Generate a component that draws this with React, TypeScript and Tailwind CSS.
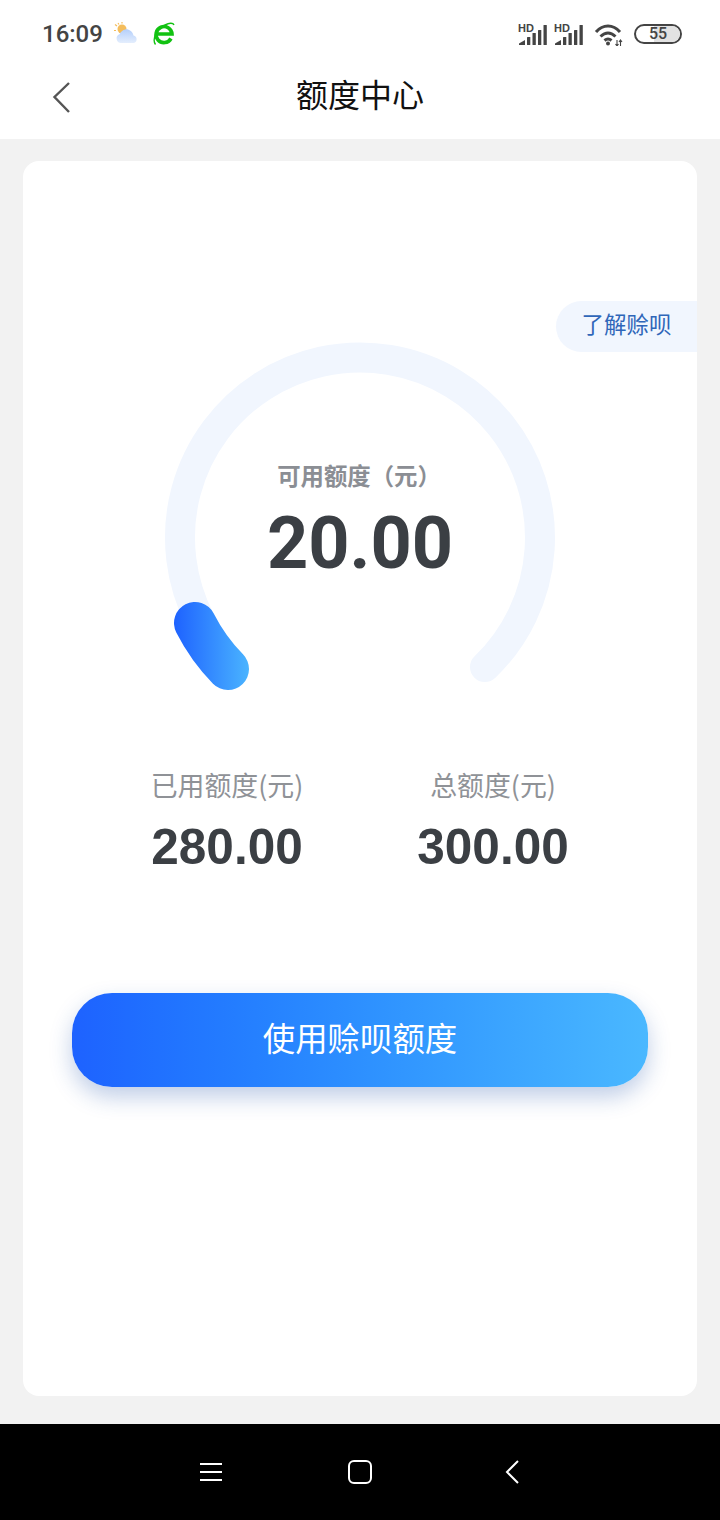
const cjk = "font-['Noto_Sans_CJK_SC','Noto_Sans',sans-serif]";

function SignalIcon() {
  return (
    <div className="relative w-[30px] h-[24px]">
      <span className="absolute left-[-1px] top-0 font-['Liberation_Sans',sans-serif] font-bold text-[11px] leading-[12px] text-[#444]">HD</span>
      <svg width="30" height="24" viewBox="0 0 30 24" fill="#444" className="absolute left-0 top-0">
        <path d="M0 23v-1.500L6 18v5z" />
        <rect x="8" y="15" width="3.300" height="8" rx="0.5" />
        <rect x="13.500" y="11" width="3.300" height="12" rx="0.5" />
        <rect x="19" y="8" width="3.300" height="15" rx="0.5" />
        <rect x="24.500" y="3" width="3.300" height="20" rx="0.5" />
      </svg>
    </div>
  );
}

function StatusBar() {
  return (
    <div className="h-[68px] flex items-center pl-[42px] pr-[38px]">
      <span className="font-['Roboto',sans-serif] font-medium text-[24px] text-[#444]">16:09</span>
      <svg width="26" height="24" viewBox="0 0 26 24" className="ml-[11px]">
        <defs>
          <linearGradient id="cloud" x1="0" y1="0" x2="0" y2="1">
            <stop offset="0" stopColor="#b4cffb" />
            <stop offset="1" stopColor="#e4eefd" />
          </linearGradient>
        </defs>
        <circle cx="8" cy="7" r="4.500" fill="#f4bd5c" />
        <path d="M3 4 1 2.500M8 0v1.500M2 8.500H0M4 1l1 1.500" stroke="#f4bd5c" strokeWidth="1.200" />
        <path d="M7 21a4.500 4.500 0 0 1-1.500-8.700C7 9 11 6.500 14 7.500c3 1 5 3 5.500 6a3.900 3.900 0 0 1 .5 7.500z" fill="url(#cloud)" />
      </svg>
      <svg width="24" height="24" viewBox="0 0 24 24" className="ml-[12px]" fill="none" stroke="#12c212">
        <path d="M19 16.500A8 8 0 1 1 20 12H5.500" strokeWidth="3.600" />
        <path d="M3.500 22.500C0 18 4 7 13 3c4-2 8-2.500 9 0" strokeWidth="1.400" />
      </svg>
      <div className="ml-auto flex items-center">
        <SignalIcon />
        <div className="ml-[6px]"><SignalIcon /></div>
        <svg width="30" height="24" viewBox="0 0 30 24" fill="none" className="ml-[9px]" stroke="#444" strokeWidth="3">
          <path d="M2 10C9 2 19 2 26 10" />
          <path d="M6.500 14.500c4.800-4.500 10.200-4.500 15 0" />
          <path d="M10.500 18.500c2.500-2.200 4.500-2.200 7 0" />
          <circle cx="14" cy="21.500" r="2" fill="#444" stroke="none" />
          <path d="M23 18v6M21.500 22l1.500 2 1.500-2M26.500 24v-6M25 20l1.500-2 1.500 2" strokeWidth="1.100" />
        </svg>
        <div className="ml-[10px] relative w-[48px] h-[20px] rounded-full border-2 border-[#444] overflow-hidden flex items-center justify-center">
          <div className="absolute right-0 top-0 bottom-0 w-[26px] bg-[#e2e2e2] rounded-r-full" />
          <span className="relative font-['Roboto',sans-serif] font-medium text-[16px] leading-none text-[#444]">55</span>
        </div>
      </div>
    </div>
  );
}

function Header() {
  return (
    <div className="relative h-[71px] flex items-center justify-center bg-white">
      <svg width="20" height="36" viewBox="0 0 20 36" fill="none" className="absolute left-[52px] top-[11px]">
        <path d="M17 4 2.500 18 17 33" stroke="#555" strokeWidth="2.400" />
      </svg>
      <span className={`${cjk} text-[32px] leading-none text-[#111] -mt-[22px]`}>额度中心</span>
    </div>
  );
}

function Gauge() {
  return (
    <div className="relative self-center w-[390px] h-[350px] -mt-[9px]">
      <svg width="390" height="350" viewBox="0 0 390 350" fill="none" className="overflow-visible">
        <defs>
          <linearGradient id="progress" gradientUnits="userSpaceOnUse" x1="9" y1="0" x2="84" y2="0">
            <stop offset="0" stopColor="#1e62ff" />
            <stop offset="1" stopColor="#4ab4ff" />
          </linearGradient>
        </defs>
        <path d="M35 277A180 180 0 1 1 320 324" stroke="#f1f6fe" strokeWidth="30" strokeLinecap="round" />
        <path d="M30 280A186 186 0 0 0 63 326" stroke="url(#progress)" strokeWidth="42" strokeLinecap="round" />
      </svg>
      <div className="absolute inset-x-0 top-[115px] flex flex-col items-center">
        <span className={`${cjk} font-bold text-[23.400px] leading-[34px] text-[#8b8e94] -ml-[2px]`}>可用额度（元）</span>
        <span className="mt-[9px] font-['Roboto',sans-serif] font-bold text-[72px] leading-[86px] text-[#3b3f44]">20.00</span>
      </div>
    </div>
  );
}

function Stat({ label, value }: { label: string; value: string }) {
  return (
    <div className="w-[266px] flex flex-col items-center">
      <span className={`${cjk} text-[26.900px] leading-[38px] text-[#8f9297]`}>{label}</span>
      <span className="mt-[15px] font-['Liberation_Sans',sans-serif] font-bold text-[49.500px] leading-[56px] text-[#3b3f44]">{value}</span>
    </div>
  );
}

function NavBar() {
  return (
    <div className="h-[96px] bg-black flex items-center">
      <div className="w-full flex items-center pl-[200px]">
        <svg width="22" height="20" viewBox="0 0 22 20" stroke="#fff" strokeWidth="2">
          <path d="M0 2h22M0 10h22M0 18h22" />
        </svg>
        <div className="ml-[126px] w-[24px] h-[24px] rounded-[6px] border-2 border-white" />
        <svg width="14" height="24" viewBox="0 0 14 24" fill="none" stroke="#fff" strokeWidth="2" className="ml-[133px]">
          <path d="M13 1 2 12l11 11" />
        </svg>
      </div>
    </div>
  );
}

export default function App() {
  return (
    <div className="w-[720px] h-[1520px] bg-[#f2f2f2] flex flex-col">
      <div className="bg-white h-[139px]">
        <StatusBar />
        <Header />
      </div>
      <div className="mt-[22px] mx-[23px] h-[1235px] bg-white rounded-[16px] flex flex-col">
        <div className="mt-[140px] self-end w-[141px] h-[51px] rounded-l-full bg-[#f1f6fe] flex items-center justify-center">
          <span className={`${cjk} text-[22.500px] text-[#2f66b9] -mt-[6px]`}>了解赊呗</span>
        </div>
        <Gauge />
        <div className="mt-[73px] flex justify-center">
          <Stat label="已用额度(元)" value="280.00" />
          <Stat label="总额度(元)" value="300.00" />
        </div>
        <button className="mt-[118px] mx-[49px] h-[94px] rounded-[40px] bg-gradient-to-r from-[#1e62ff] to-[#4ab8ff] shadow-[0_10px_22px_rgba(30,80,170,0.28)] flex items-center justify-center">
          <span className={`${cjk} text-[32.400px] text-white -mt-[6px]`}>使用赊呗额度</span>
        </button>
      </div>
      <div className="mt-[28px]">
        <NavBar />
      </div>
    </div>
  );
}
